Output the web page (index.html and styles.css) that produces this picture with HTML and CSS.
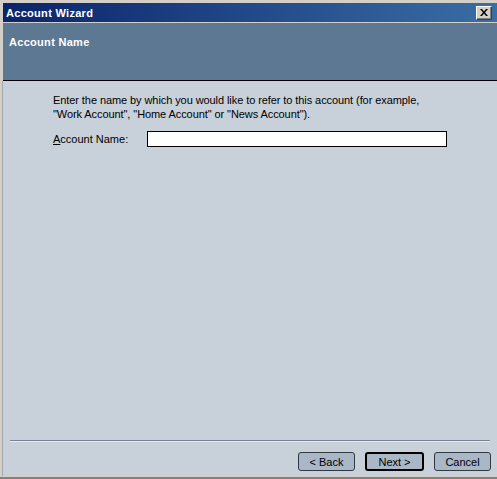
FILE: index.html
```html
<!DOCTYPE html>
<html>
<head>
<meta charset="utf-8">
<link rel="stylesheet" href="styles.css">
</head>
<body>
<div class="window">
  <div class="titlebar">
    <span class="title">Account Wizard</span>
    <span class="close">
      <svg width="8" height="7" viewBox="0 0 8 7"><path d="M0 0h2l2 2.5L6 0h2L5 3.5 8 7H6L4 4.5 2 7H0l3-3.5z" fill="#000"/></svg>
    </span>
  </div>
  <div class="header">Account Name</div>
  <div class="content">
    <div class="main">
      <p class="desc">Enter the name by which you would like to refer to this account (for example,<br>"Work Account", "Home Account" or "News Account").</p>
      <div class="field">
        <label class="label"><u>A</u>ccount Name:</label>
        <div class="input"></div>
      </div>
    </div>
    <div class="separator"></div>
    <div class="buttons">
      <div class="btn">&lt; Back</div>
      <div class="btn btn-default">Next &gt;</div>
      <div class="btn">Cancel</div>
    </div>
  </div>
</div>
</body>
</html>
```

FILE: styles.css
```css
html, body {
  margin: 0;
  padding: 0;
  background: #d4d0c8;
}
body {
  font-family: "Liberation Sans", Arial, sans-serif;
  font-size: 11px;
  line-height: 14px;
  color: #000;
}
.window {
  width: 497px;
  height: 479px;
  box-sizing: border-box;
  padding: 3px 0 1px 3px;
  border-bottom: 2px solid #808080;
  display: flex;
  flex-direction: column;
  background: #d4d0c8;
}
.titlebar {
  height: 19px;
  flex: none;
  background: linear-gradient(to right, #0a246a, #3a6ea5);
  display: flex;
  align-items: center;
  justify-content: space-between;
  padding: 0 5px 0 3px;
}
.title {
  color: #fff;
  font-weight: bold;
  font-size: 11px;
  letter-spacing: 0.3px;
}
.close {
  width: 16px;
  height: 14px;
  box-sizing: border-box;
  background: #d4d0c8;
  border-top: 1px solid #fff;
  border-left: 1px solid #fff;
  border-right: 1px solid #404040;
  border-bottom: 1px solid #404040;
  box-shadow: inset -1px -1px 0 #808080;
  display: flex;
  align-items: center;
  justify-content: center;
}
.header {
  margin-top: 1px;
  height: 58px;
  flex: none;
  box-sizing: border-box;
  background: #5d7893;
  border-bottom: 1px solid #000;
  color: #fff;
  font-weight: bold;
  letter-spacing: 0.3px;
  padding: 12px 0 0 6px;
}
.content {
  flex: 1;
  background: #c8d0d9;
  display: flex;
  flex-direction: column;
  border-left: 1px solid #a0a8b0;
  margin-left: -1px;
}
.main {
  flex: 1;
  padding: 12px 0 0 50px;
}
.desc {
  margin: 0;
  letter-spacing: -0.08px;
}
.field {
  display: flex;
  align-items: center;
  margin-top: 10px;
}
.label {
  width: 94px;
}
.input {
  width: 300px;
  height: 16px;
  box-sizing: border-box;
  background: #fff;
  border: 1px solid #000;
}
.separator {
  margin: 0 7px 0 7px;
  height: 1px;
  background: #7a8494;
  border-bottom: 1px solid #e4e8ee;
}
.buttons {
  display: flex;
  justify-content: flex-end;
  gap: 10px;
  padding: 10px 6px 5px 0;
}
.btn {
  width: 57px;
  height: 19px;
  box-sizing: border-box;
  background: #a9b7c6;
  border: 1px solid #303840;
  border-radius: 3px;
  display: flex;
  align-items: center;
  justify-content: center;
}
.btn-default {
  width: 59px;
  border: 2px solid #000;
}
```
